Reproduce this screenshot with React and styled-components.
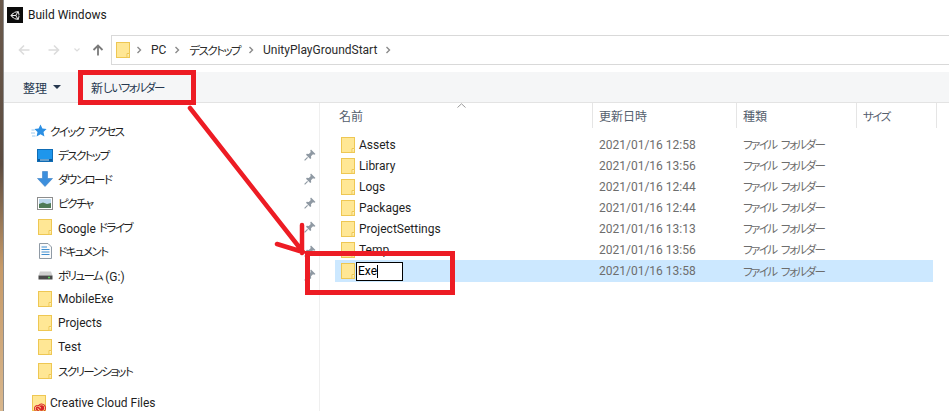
import React from 'react';
import styled, { createGlobalStyle } from 'styled-components';
import { FaUnity } from 'react-icons/fa';
import { SiAdobecreativecloud } from 'react-icons/si';

const GlobalStyle = createGlobalStyle`
  html, body {
    margin: 0;
    padding: 0;
    background: #ffffff;
  }
  body {
    font-family: Roboto, "Noto Sans CJK JP", sans-serif;
    font-feature-settings: "palt";
    font-size: 12px;
    color: #1a1a1a;
  }
`;

const Page = styled.div`
  position: relative;
  display: flex;
  width: 949px;
  height: 411px;
  overflow: hidden;
`;

const Wallpaper = styled.div`
  width: 4px;
  flex: none;
  box-sizing: border-box;
  border-right: 1px solid #8f8f8f;
  background: linear-gradient(180deg, #6b5a4c 0%, #5d4c40 40%, #c79a68 65%, #d8b68c 100%);
`;

const Explorer = styled.div`
  flex: 1;
  display: flex;
  flex-direction: column;
  min-width: 0;
  background: #ffffff;
`;

const TitleBar = styled.div`
  height: 30px;
  display: flex;
  align-items: center;
  gap: 5px;
  padding-left: 3px;
  font-size: 12px;
  color: #1a1a1a;
`;

const AppIcon = styled.div`
  width: 16px;
  height: 16px;
  background: #0b0b0b;
  color: #e8e8e8;
  display: flex;
  align-items: center;
  justify-content: center;
  font-size: 11px;
`;

const NavBar = styled.div`
  height: 42px;
  box-sizing: border-box;
  padding-top: 5px;
  display: flex;
  align-items: flex-start;
`;

const NavButtons = styled.div`
  width: 107px;
  height: 30px;
  flex: none;
  display: flex;
  align-items: center;
  padding-left: 14px;
  box-sizing: border-box;
`;

const NavGlyph = styled.svg`
  display: block;
  flex: none;
  margin-right: ${({ $gap }) => $gap}px;
`;

const AddressBar = styled.div`
  flex: 1;
  height: 30px;
  box-sizing: border-box;
  border: 1px solid #d9d9d9;
  border-right: none;
  display: flex;
  align-items: center;
  padding-left: 4px;
  color: #2b2b2b;
`;

const AddressIcon = styled.span`
  display: flex;
  margin-right: 6px;
`;

const Crumb = styled.span`
  margin-left: 9px;
  margin-right: 8px;
`;

// kana in the reference font run much narrower than in Noto
const Kana = styled.span`
  font-size: 11.5px;
  letter-spacing: -1.55px;
  word-spacing: 3px;
  vertical-align: 1px;
`;

const Toolbar = styled.div`
  height: 31px;
  box-sizing: border-box;
  background: #f5f6f7;
  border-bottom: 1px solid #e3e3e3;
  display: flex;
  align-items: center;
  padding-left: 19px;
  color: #26384f;
`;

const ToolbarMenu = styled.span`
  display: flex;
  align-items: center;
  gap: 6px;
  width: 68px;
`;

const Caret = styled.span`
  width: 0;
  height: 0;
  border-left: 4px solid transparent;
  border-right: 4px solid transparent;
  border-top: 4px solid #26384f;
`;

const Body = styled.div`
  flex: 1;
  display: flex;
  min-height: 0;
`;

const Sidebar = styled.nav`
  width: 316px;
  flex: none;
  box-sizing: border-box;
  padding-top: 16px;
  border-right: 1px solid #efefef;
  display: flex;
  flex-direction: column;
`;

const SideItem = styled.div`
  height: 24px;
  flex: none;
  display: flex;
  align-items: center;
  padding-left: ${({ $top }) => ($top ? 27 : 33)}px;
  margin-top: ${({ $gapTop }) => $gapTop || 0}px;
  gap: ${({ $top }) => ($top ? 3 : 5)}px;
  color: #1f1f1f;
`;

const SideIcon = styled.span`
  position: relative;
  width: 16px;
  height: 16px;
  flex: none;
  display: flex;
  align-items: center;
  justify-content: center;
`;

const SideLabel = styled.span`
  flex: 1;
`;

const PinSlot = styled.span`
  width: 15px;
  flex: none;
  display: flex;
  justify-content: flex-start;
`;

const Badge = styled.span`
  position: absolute;
  left: 2px;
  bottom: -2px;
  width: 13px;
  height: 11px;
  display: flex;
  align-items: center;
  justify-content: center;
  color: #d8232a;
  font-size: 12px;
`;

const ListPane = styled.main`
  flex: 1;
  min-width: 0;
`;

const ColumnHeader = styled.div`
  display: grid;
  grid-template-columns: 258px 144px 120px 80px;
  height: 25px;
  padding-left: 15px;
  position: relative;
`;

const HeaderCell = styled.div`
  display: flex;
  align-items: center;
  padding-left: ${({ $pad }) => $pad}px;
  border-right: 1px solid #e5e5e5;
  color: #55606e;
`;

const SortCaret = styled.svg`
  position: absolute;
  left: 137px;
  top: 0;
`;

const FileList = styled.div`
  margin: 6px 0 0 15px;
  width: 598px;
`;

const FileRow = styled.div`
  display: grid;
  grid-template-columns: 258px 144px 120px 76px;
  align-items: center;
  height: ${({ $selected }) => ($selected ? 22 : 21)}px;
  background: ${({ $selected }) => ($selected ? '#cce8ff' : 'transparent')};
`;

const NameCell = styled.div`
  display: flex;
  align-items: center;
  gap: 4px;
  padding-left: 6px;
  color: #1f1f1f;
`;

const MetaCell = styled.div`
  padding-left: 6px;
  color: #6d6d6d;
`;

const RenameBox = styled.div`
  width: 47px;
  height: 19px;
  box-sizing: border-box;
  margin-left: -3px;
  padding-left: 1px;
  border: 1px solid #000000;
  background: #ffffff;
  color: #000000;
  display: flex;
  align-items: center;
`;

const TextCursor = styled.span`
  width: 1px;
  height: 13px;
  background: #000000;
`;

const RedFrame = styled.div`
  position: absolute;
  box-sizing: border-box;
  left: ${({ $x }) => $x}px;
  top: ${({ $y }) => $y}px;
  width: ${({ $w }) => $w}px;
  height: ${({ $h }) => $h}px;
  border: 5px solid #ed1c24;
  pointer-events: none;
`;

const ArrowLayer = styled.svg`
  position: absolute;
  left: 0;
  top: 0;
  pointer-events: none;
`;

const FolderIcon = () => (
  <svg width="14" height="16" viewBox="0 0 14 16">
    <rect x="0.5" y="0.5" width="13" height="15" fill="#ffe795" stroke="#eec753" />
    <path d="M11 15.5V11.5H13.5" fill="#fff3c4" stroke="#eec753" />
  </svg>
);

const ChevronIcon = ({ gap = 0 }) => (
  <NavGlyph $gap={gap} width="6" height="8" viewBox="0 0 6 8">
    <path d="M1.5 1L4.5 4L1.5 7" fill="none" stroke="#8a8a8a" strokeWidth="1.4" />
  </NavGlyph>
);

const StarIcon = () => (
  <svg width="16" height="16" viewBox="0 0 16 16">
    <path d="M9.5 1.5L11.4 5.6L15.6 6.1L12.5 9L13.4 13.4L9.5 11.2L5.6 13.4L6.5 9L3.4 6.1L7.6 5.6Z" fill="#2b8fe3" />
    <path d="M0.5 7H3.5M0 10H4M1 13H4.5" stroke="#9ccbf0" strokeWidth="1" />
  </svg>
);

const DesktopIcon = () => (
  <svg width="16" height="13" viewBox="0 0 16 13">
    <rect x="0.5" y="0.5" width="15" height="12" fill="#1e96ec" stroke="#0f6cb5" />
    <rect x="1" y="10" width="14" height="2" fill="#0c5d9e" />
    <rect x="3" y="10.5" width="9" height="1" fill="#bfe2fa" />
  </svg>
);

const DownloadIcon = () => (
  <svg width="16" height="16" viewBox="0 0 16 16">
    <path d="M5.5 0.5H10.5V7.5H15.5L8 15.5L0.5 7.5H5.5Z" fill="#3c8fdd" stroke="#3a7fc4" strokeWidth="0.6" />
  </svg>
);

const PictureIcon = () => (
  <svg width="16" height="13" viewBox="0 0 16 13">
    <rect x="0.5" y="0.5" width="15" height="12" fill="#ffffff" stroke="#8d8d8d" />
    <rect x="2" y="2" width="12" height="9" fill="#bcd8ec" />
    <path d="M2 7L6 5.5L10 7L14 6V11H2Z" fill="#4e7a55" />
  </svg>
);

const DocumentIcon = () => (
  <svg width="13" height="16" viewBox="0 0 13 16">
    <path d="M0.5 0.5H9L12.5 4V15.5H0.5Z" fill="#fbfbfb" stroke="#8f9aa5" />
    <path d="M2.5 4H8M2.5 6.5H10.5M2.5 9H10.5M2.5 11.5H10.5" stroke="#3f8ed0" strokeWidth="1" />
  </svg>
);

const DriveIcon = () => (
  <svg width="15" height="9" viewBox="0 0 15 9">
    <path d="M2 0.5H13L14.5 4.5H0.5Z" fill="#d0d0d0" />
    <rect x="0.5" y="4.5" width="14" height="4" fill="#4a4a4a" />
    <rect x="10" y="5.8" width="2" height="1.5" fill="#59d45a" />
  </svg>
);

const PinIcon = () => (
  <svg width="12" height="12" viewBox="0 0 12 12">
    <path d="M7 0.5L11.5 5L10.3 5.8L9 5.2L7 7.2L7.2 9.2L6.2 10L2 5.8L2.8 4.8L4.8 5L6.8 3L6.2 1.7Z" fill="#8f99a3" />
    <path d="M3.6 8.4L0.6 11.4" stroke="#8f99a3" strokeWidth="1.2" />
  </svg>
);

const quickAccess = [
  { id: 'desktop', label: <Kana>デスクトップ</Kana>, icon: <DesktopIcon /> },
  { id: 'downloads', label: <Kana>ダウンロード</Kana>, icon: <DownloadIcon /> },
  { id: 'pictures', label: <Kana>ピクチャ</Kana>, icon: <PictureIcon /> },
  { id: 'drive', label: <>Google <Kana>ドライブ</Kana></>, icon: <FolderIcon /> },
  { id: 'documents', label: <Kana>ドキュメント</Kana>, icon: <DocumentIcon /> },
  { id: 'volume', label: <><Kana>ボリューム</Kana> (G:)</>, icon: <DriveIcon /> },
  { id: 'mobile', label: 'MobileExe', icon: <FolderIcon />, unpinned: true },
  { id: 'projects', label: 'Projects', icon: <FolderIcon />, unpinned: true },
  { id: 'test', label: 'Test', icon: <FolderIcon />, unpinned: true },
  { id: 'shots', label: <Kana>スクリーンショット</Kana>, icon: <FolderIcon />, unpinned: true },
];

const files = [
  { name: 'Assets', date: '2021/01/16 12:58' },
  { name: 'Library', date: '2021/01/16 13:56' },
  { name: 'Logs', date: '2021/01/16 12:44' },
  { name: 'Packages', date: '2021/01/16 12:44' },
  { name: 'ProjectSettings', date: '2021/01/16 13:13' },
  { name: 'Temp', date: '2021/01/16 13:56' },
  { name: 'Exe', date: '2021/01/16 13:58', editing: true },
];

const App = () => (
  <Page>
    <GlobalStyle />
    <Wallpaper />
    <Explorer>
      <TitleBar>
        <AppIcon><FaUnity /></AppIcon>
        Build Windows
      </TitleBar>

      <NavBar>
        <NavButtons>
          <NavGlyph $gap={18} width="12" height="12" viewBox="0 0 12 12">
            <path d="M11.5 6H1.5M6 1.5L1.5 6L6 10.5" fill="none" stroke="#dcdcdc" strokeWidth="1.6" />
          </NavGlyph>
          <NavGlyph $gap={14} width="12" height="12" viewBox="0 0 12 12">
            <path d="M0.5 6H10.5M6 1.5L10.5 6L6 10.5" fill="none" stroke="#dcdcdc" strokeWidth="1.6" />
          </NavGlyph>
          <NavGlyph $gap={12} width="6" height="4" viewBox="0 0 6 4">
            <path d="M0.5 0.5L3 3L5.5 0.5" fill="none" stroke="#dcdcdc" strokeWidth="1.2" />
          </NavGlyph>
          <NavGlyph width="12" height="12" viewBox="0 0 12 12">
            <path d="M6 11.5V1.5M1.5 6L6 1.5L10.5 6" fill="none" stroke="#7a7a7a" strokeWidth="1.8" />
          </NavGlyph>
        </NavButtons>
        <AddressBar>
          <AddressIcon><FolderIcon /></AddressIcon>
          <ChevronIcon />
          <Crumb>PC</Crumb>
          <ChevronIcon />
          <Crumb><Kana>デスクトップ</Kana></Crumb>
          <ChevronIcon />
          <Crumb>UnityPlayGroundStart</Crumb>
          <ChevronIcon />
        </AddressBar>
      </NavBar>

      <Toolbar>
        <ToolbarMenu>整理 <Caret /></ToolbarMenu>
        <span>新<Kana>しいフォルダー</Kana></span>
      </Toolbar>

      <Body>
        <Sidebar>
          <SideItem $top>
            <SideIcon><StarIcon /></SideIcon>
            <SideLabel><Kana>クイック アクセス</Kana></SideLabel>
          </SideItem>
          {quickAccess.map((item) => (
            <SideItem key={item.id}>
              <SideIcon>{item.icon}</SideIcon>
              <SideLabel>{item.label}</SideLabel>
              {!item.unpinned && <PinSlot><PinIcon /></PinSlot>}
            </SideItem>
          ))}
          <SideItem $top $gapTop={8}>
            <SideIcon>
              <FolderIcon />
              <Badge><SiAdobecreativecloud /></Badge>
            </SideIcon>
            <SideLabel>Creative Cloud Files</SideLabel>
          </SideItem>
        </Sidebar>

        <ListPane>
          <ColumnHeader>
            <HeaderCell $pad={4}>名前</HeaderCell>
            <HeaderCell $pad={6}>更新日時</HeaderCell>
            <HeaderCell $pad={6}>種類</HeaderCell>
            <HeaderCell $pad={6}><Kana>サイズ</Kana></HeaderCell>
            <SortCaret width="9" height="5" viewBox="0 0 9 5">
              <path d="M0.5 4.5L4.5 0.8L8.5 4.5" fill="none" stroke="#9a9a9a" strokeWidth="1" />
            </SortCaret>
          </ColumnHeader>
          <FileList>
            {files.map((file) => (
              <FileRow key={file.name} $selected={file.editing}>
                <NameCell>
                  <FolderIcon />
                  {file.editing ? (
                    <RenameBox>{file.name}<TextCursor /></RenameBox>
                  ) : file.name}
                </NameCell>
                <MetaCell>{file.date}</MetaCell>
                <MetaCell><Kana>ファイル フォルダー</Kana></MetaCell>
                <div />
              </FileRow>
            ))}
          </FileList>
        </ListPane>
      </Body>
    </Explorer>

    <ArrowLayer width="949" height="411" viewBox="0 0 949 411">
      <path d="M190 108L303 252M302 225V253M277 244L303 252" fill="none" stroke="#ed1c24" strokeWidth="4.5" strokeLinecap="round" />
    </ArrowLayer>
    <RedFrame $x={78} $y={70} $w={118} $h={35} />
    <RedFrame $x={305} $y={251} $w={150} $h={44} />
  </Page>
);

export default App;
